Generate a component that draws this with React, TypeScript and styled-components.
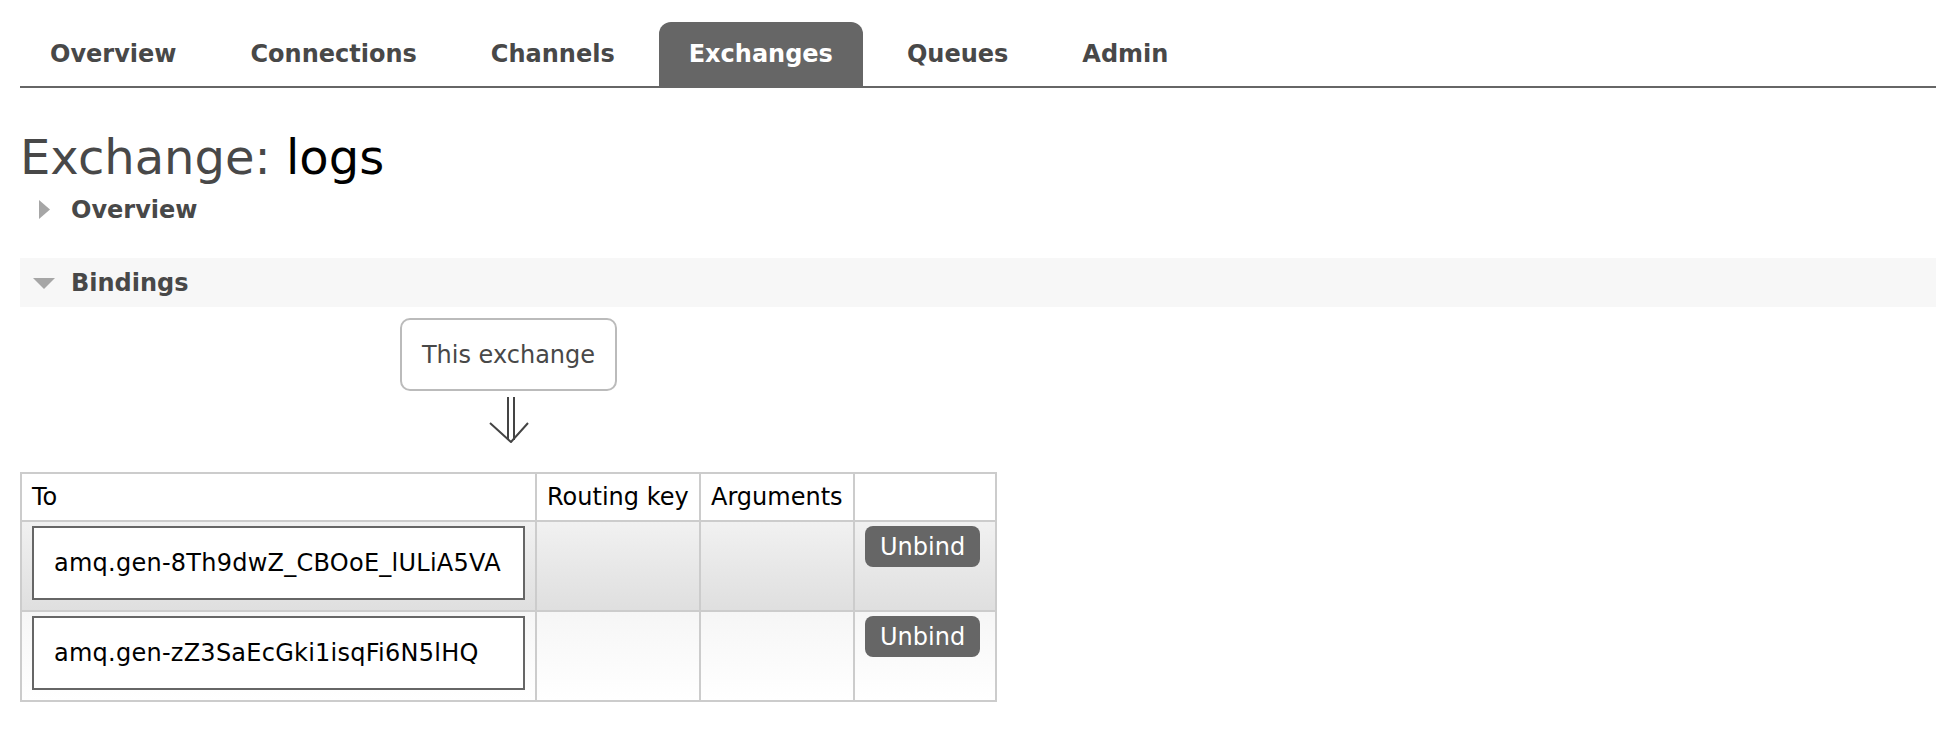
import React from 'react';
import styled, { createGlobalStyle } from 'styled-components';

const GlobalStyle = createGlobalStyle`
  body {
    margin: 0;
    background: #fff;
    font-family: "DejaVu Sans", Verdana, sans-serif;
    font-size: 24px;
    color: #484848;
  }
`;

const tabs = ['Overview', 'Connections', 'Channels', 'Exchanges', 'Queues', 'Admin'];
const bindings = ['amq.gen-8Th9dwZ_CBOoE_lULiA5VA', 'amq.gen-zZ3SaEcGki1isqFi6N5lHQ'];

const App = () => {
  return (
    <Page>
      <GlobalStyle />
      <Nav>
        {tabs.map((t) => (
          <Tab key={t} $active={t === 'Exchanges'}>{t}</Tab>
        ))}
      </Nav>

      <Title>
        Exchange: <Name>logs</Name>
      </Title>

      <Section>
        <SectionHeader>
          <IconSlot>
            <svg width="13" height="19" viewBox="0 0 13 19">
              <polygon points="1,0 12,9.5 1,19" fill="#a6a6a6" />
            </svg>
          </IconSlot>
          Overview
        </SectionHeader>
      </Section>

      <Section>
        <SectionHeader $open>
          <IconSlot>
            <svg width="22" height="12" viewBox="0 0 22 12">
              <polygon points="0,1 22,1 11,12" fill="#a6a6a6" />
            </svg>
          </IconSlot>
          Bindings
        </SectionHeader>

        <BindingsBody>
          <ExchangeBox>This exchange</ExchangeBox>
          <Arrow width="40" height="46" viewBox="0 0 40 46">
            <g stroke="#444" strokeWidth="2" fill="none">
              <line x1="19" y1="0" x2="19" y2="43" />
              <line x1="25" y1="0" x2="25" y2="43" />
              <polyline points="1,26 22,45 39,26" />
            </g>
          </Arrow>

          <Table>
            <colgroup>
              <col style={{ width: 515 }} />
              <col style={{ width: 164 }} />
              <col style={{ width: 154 }} />
              <col style={{ width: 142 }} />
            </colgroup>
            <thead>
              <tr>
                <HeadCell>To</HeadCell>
                <HeadCell>Routing key</HeadCell>
                <HeadCell>Arguments</HeadCell>
                <HeadCell></HeadCell>
              </tr>
            </thead>
            <tbody>
              {bindings.map((q, i) => (
                <tr key={q}>
                  <Cell $alt={i % 2 === 0}>
                    <QueueBox>{q}</QueueBox>
                  </Cell>
                  <Cell $alt={i % 2 === 0}></Cell>
                  <Cell $alt={i % 2 === 0}></Cell>
                  <Cell $alt={i % 2 === 0}>
                    <UnbindButton>Unbind</UnbindButton>
                  </Cell>
                </tr>
              ))}
            </tbody>
          </Table>
        </BindingsBody>
      </Section>
    </Page>
  );
};

const Page = styled.div`
  padding: 22px 0 40px 20px;
`;

const Nav = styled.ul`
  display: flex;
  gap: 14px;
  margin: 0;
  padding: 0;
  list-style: none;
  border-bottom: 2px solid #666;
`;

const Tab = styled.li<{ $active?: boolean }>`
  display: flex;
  align-items: center;
  height: 64px;
  padding: 0 30px;
  font-weight: bold;
  color: ${(p) => (p.$active ? '#fff' : '#484848')};
  background: ${(p) => (p.$active ? '#666' : 'transparent')};
  border-radius: 12px 12px 0 0;
`;

const Title = styled.h1`
  margin: 41px 0 0 0;
  font-size: 48px;
  font-weight: normal;
  line-height: 56px;
  color: #484848;
`;

const Name = styled.span`
  color: #000;
`;

const Section = styled.div`
  & + & {
    margin-top: 24px;
  }
`;

const SectionHeader = styled.div<{ $open?: boolean }>`
  display: flex;
  align-items: center;
  gap: 15px;
  height: 49px;
  padding-left: 12px;
  font-weight: bold;
  color: #484848;
  background: ${(p) => (p.$open ? '#f7f7f7' : 'transparent')};
`;

const IconSlot = styled.span`
  display: flex;
  justify-content: center;
  width: 24px;
`;

const BindingsBody = styled.div`
  display: inline-flex;
  flex-direction: column;
  align-items: center;
  padding-top: 11px;
`;

const ExchangeBox = styled.div`
  display: flex;
  align-items: center;
  box-sizing: border-box;
  height: 73px;
  padding: 0 20px;
  border: 2px solid #bbb;
  border-radius: 10px;
  color: #484848;
`;

const Arrow = styled.svg`
  display: block;
  margin: 6px 0 29px;
`;

const Table = styled.table`
  border-collapse: collapse;
  table-layout: fixed;
  width: 975px;
  color: #000;
`;

const HeadCell = styled.th`
  height: 46px;
  padding: 0 10px;
  border: 2px solid #ccc;
  text-align: left;
  font-weight: normal;
  background: #fff;
`;

const Cell = styled.td<{ $alt?: boolean }>`
  height: 74px;
  padding: 4px 10px 10px;
  border: 2px solid #ccc;
  vertical-align: top;
  background: ${(p) =>
    p.$alt
      ? 'linear-gradient(#f1f1f1, #dfdfdf)'
      : 'linear-gradient(#f6f6f6, #ffffff)'};
`;

const QueueBox = styled.div`
  display: flex;
  align-items: center;
  box-sizing: border-box;
  height: 74px;
  padding-left: 20px;
  border: 2px solid #666;
  background: #fff;
  white-space: nowrap;
  letter-spacing: 0.25px;
`;

const UnbindButton = styled.button`
  height: 41px;
  padding: 0 15px;
  margin-top: 0;
  border: none;
  border-radius: 8px;
  background: #666;
  color: #fff;
  font-family: inherit;
  font-size: 24px;
`;

export default App;
